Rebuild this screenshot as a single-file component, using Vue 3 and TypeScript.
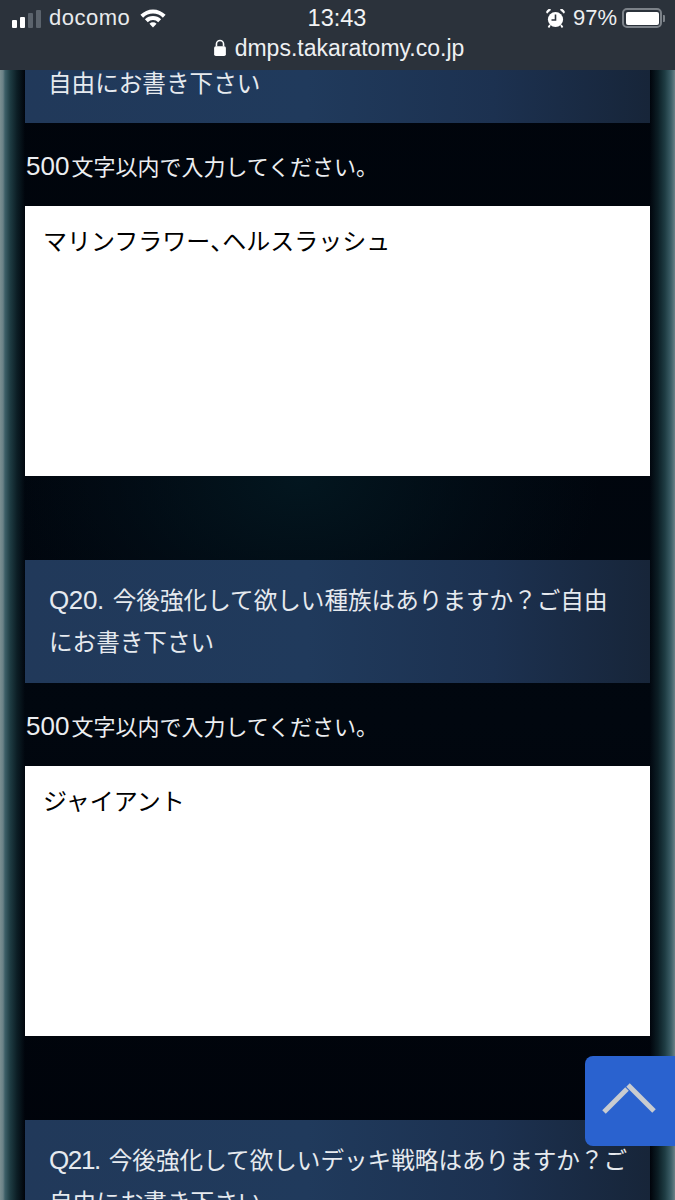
<script setup lang="ts">
interface Block {
  id: string
  num: string
  q: string
  answer: string
  note: boolean
  narrow: boolean
}
const blocks: Block[] = [
  { id: 'q20', num: 'Q20.', q: '今後強化して欲しい種族はありますか\uFF1Fご自由にお書き下さい', answer: 'ジャイアント', note: true, narrow: false },
  { id: 'q21', num: 'Q21.', q: '今後強化して欲しいデッキ戦略はありますか\uFF1Fご自由にお書き下さい', answer: '', note: false, narrow: true },
]
</script>

<template>
  <div class="page">
    <header class="bar">
      <div class="status">
        <div class="left">
          <span class="signal"><i class="on s1"></i><i class="on s2"></i><i class="s3"></i><i class="s4"></i></span>
          <span class="carrier">docomo</span>
          <svg class="wifi" width="28" height="21" viewBox="0 0 26 20">
            <path d="M1 6.5 A17 17 0 0 1 25 6.5 L22.4 9.2 A13.4 13.4 0 0 0 3.6 9.2Z" fill="#fff"/>
            <path d="M5.3 10.8 A11 11 0 0 1 20.7 10.8 L18 13.5 A7.2 7.2 0 0 0 8 13.5Z" fill="#fff"/>
            <path d="M9.6 15 A5 5 0 0 1 16.4 15 L13 18.6Z" fill="#fff"/>
          </svg>
        </div>
        <div class="time">13:43</div>
        <div class="right">
          <svg class="alarm" width="19" height="21" viewBox="0 0 19 21">
            <circle cx="9.5" cy="11.5" r="7.6" fill="#fff"/>
            <path d="M1 5.2 L4.6 1.8 A2.6 2.6 0 0 0 1 5.2Z M18 5.2 L14.4 1.8 A2.6 2.6 0 0 1 18 5.2Z" fill="#fff" stroke="#fff"/>
            <path d="M9.5 6.5 V12 H5.5" fill="none" stroke="#2b323b" stroke-width="1.6"/>
            <path d="M4 17 L2.5 19.5 M15 17 L16.5 19.5" stroke="#fff" stroke-width="1.8"/>
          </svg>
          <span class="pct">97%</span>
          <span class="battery"><span class="level"></span></span>
          <span class="nub"></span>
        </div>
      </div>
      <div class="url">
        <svg width="14" height="18" viewBox="0 0 15 19">
          <path d="M3.7 8 V5.2 A3.8 3.8 0 0 1 11.3 5.2 V8" fill="none" stroke="#fff" stroke-width="1.7"/>
          <rect x="1.2" y="7.6" width="12.6" height="10.4" rx="1.8" fill="#fff"/>
        </svg>
        <span>dmps.takaratomy.co.jp</span>
      </div>
    </header>

    <main class="content">
      <h2 class="question clipped">自由にお書き下さい</h2>
      <p class="note"><span class="digits">500</span>文字以内で入力してください。</p>
      <div class="answer" role="textbox">マリンフラワー<span class="comma">、</span>ヘルスラッシュ</div>

      <template v-for="b in blocks" :key="b.id">
        <h2 class="question"><span class="num" :class="{ narrow: b.narrow }">{{ b.num }}</span>{{ b.q }}</h2>
        <template v-if="b.note">
          <p class="note"><span class="digits">500</span>文字以内で入力してください。</p>
          <div class="answer" role="textbox">{{ b.answer }}</div>
        </template>
      </template>
    </main>

    <button class="top" aria-label="ページトップへ">
      <svg width="54" height="32" viewBox="0 0 54 32">
        <path d="M2 30 L25 7" stroke="#c9ccd0" stroke-width="5" fill="none"/>
        <path d="M26 3 L52 29" stroke="#c9ccd0" stroke-width="5" fill="none"/>
      </svg>
    </button>
  </div>
</template>

<style scoped>
.page {
  position: relative;
  width: 675px;
  height: 1200px;
  overflow: hidden;
  font-family: "Noto Sans CJK JP", "Liberation Sans", sans-serif;
  background:
    linear-gradient(90deg, #7b8f92 0, #6a8187 3px, #3d5f68 5px, #1f3d44 10px, #0c1e25 17px, rgba(0,4,10,0) 25px, rgba(0,4,10,0) 650px, #0c1e25 658px, #1f3d44 665px, #3d5f68 671px, #6a8187 675px),
    radial-gradient(ellipse 300px 200px at 300px 480px, #03161f 0, rgba(3,18,28,0.45) 60%, rgba(0,4,10,0) 100%),
    linear-gradient(180deg, #00040b 0, #01070f 60%, #00030a 100%);
}
.bar {
  height: 70px;
  background: #2b323b;
  color: #fff;
  font-family: "Liberation Sans", sans-serif;
  display: flex;
  flex-direction: column;
}
.status {
  height: 36px;
  display: grid;
  grid-template-columns: 1fr auto 1fr;
  align-items: center;
  padding: 0 10px 0 12px;
  font-size: 22px;
}
.left { display: flex; align-items: center; }
.signal { display: flex; align-items: flex-end; gap: 3px; height: 19px; width: 29px; margin-top: 1px; }
.signal i { display: block; flex: none; width: 5px; background: #5b636c; border-radius: 1px; }
.signal .on { background: #fff; }
.s1 { height: 8px; }
.s2 { height: 11px; }
.s3 { height: 15px; }
.s4 { height: 18px; }
.carrier { margin-left: 8px; color: #e8eaec; letter-spacing: 0.5px; }
.wifi { margin-left: 9px; }
.time { font-size: 23.5px; color: #f2f3f4; margin-right: 3px; }
.right { display: flex; align-items: center; justify-content: flex-end; }
.pct { margin-left: 8px; color: #eceef0; }
.battery {
  margin-left: 5px;
  width: 40px;
  height: 20px;
  border: 2px solid #7c8289;
  border-radius: 5px;
  padding: 1.5px;
  box-sizing: border-box;
  display: block;
}
.level { display: block; width: 100%; height: 100%; background: #fff; border-radius: 2px; }
.nub { width: 2px; height: 7px; background: #7c8289; margin-left: 1px; border-radius: 0 1px 1px 0; }
.url {
  height: 24px;
  display: flex;
  align-items: center;
  justify-content: center;
  gap: 8px;
  font-size: 23px;
  color: #eef0f2;
  padding-left: 2px;
}
.content {
  display: flex;
  flex-direction: column;
  padding: 0 25px;
}
.question {
  margin: 0;
  padding: 18px 20px 21px 24px;
  height: 123px;
  box-sizing: border-box;
  font-size: 23.6px;
  font-weight: 400;
  line-height: 42px;
  color: #e6eaef;
  background: linear-gradient(90deg, #21395a 0, #203a5c 45%, #1c3150 75%, #172539 100%);
}
.num {
  font-family: "Liberation Sans", sans-serif;
  font-size: 26px;
  line-height: 1;
  margin-right: 9px;
  letter-spacing: -0.4px;
}
.num.narrow { letter-spacing: -1.4px; }
.clipped { height: 53px; padding: 0 24px 0 23px; line-height: 24px; }
.note {
  margin: 0;
  height: 83px;
  line-height: 85px;
  padding-left: 1px;
  font-size: 22px;
  color: #eceef1;
  white-space: nowrap;
}
.digits {
  font-family: "Liberation Sans", sans-serif;
  font-size: 26px;
  line-height: 1;
  margin-right: 2px;
}
.answer {
  width: 625px;
  height: 270px;
  flex: none;
  box-sizing: border-box;
  margin: 0 0 84px;
  padding: 15.5px 18px;
  background: #fff;
  color: #000;
  font-size: 24px;
  line-height: 36px;
  white-space: nowrap;
}
.comma { font-feature-settings: "halt"; }
.top {
  position: absolute;
  right: 0;
  top: 1056px;
  width: 90px;
  height: 90px;
  padding: 0 2px 6px 0;
  border: 0;
  border-radius: 8px 0 0 8px;
  background: #2a62cf;
  display: flex;
  align-items: center;
  justify-content: center;
}
</style>
